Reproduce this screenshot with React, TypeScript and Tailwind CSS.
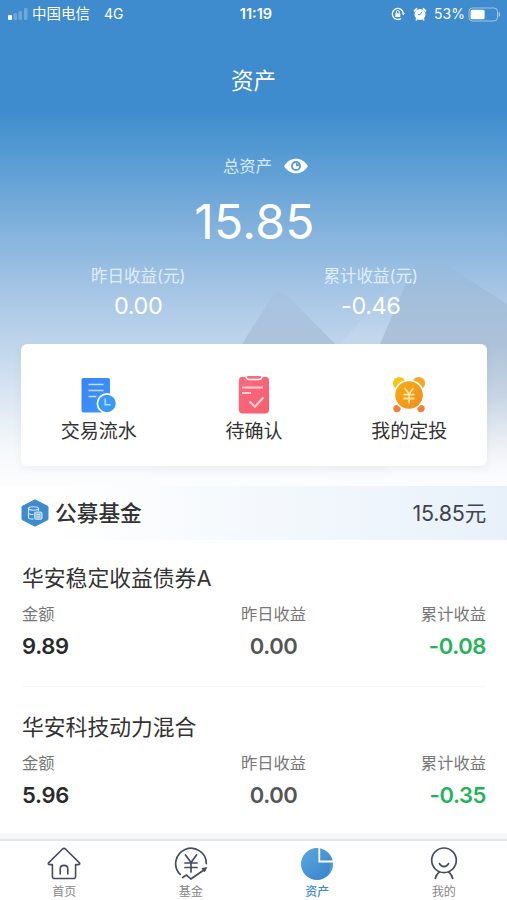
import { FC, ReactNode } from "react";

const funds = [
    { name: "华安稳定收益债券A", amount: "9.89", yesterday: "0.00", total: "-0.08" },
    { name: "华安科技动力混合", amount: "5.96", yesterday: "0.00", total: "-0.35" },
];

const StatusBar: FC = () => (
    <div className="relative flex h-7 items-center justify-between pl-2 pr-[6px] text-[14.5px] leading-7">
        <div className="flex items-center">
            <svg width="20" height="14" viewBox="0 0 20 14" fill="#fff">
                <rect x="0" y="8" width="4" height="5" rx="1" />
                <rect x="5.5" y="6" width="3.5" height="7" rx="1" opacity=".25" />
                <rect x="10.5" y="4" width="3.5" height="9" rx="1" opacity=".25" />
                <rect x="16" y="1" width="3.5" height="12" rx="1" opacity=".25" />
            </svg>
            <span className="ml-1">中国电信</span>
            <span className="ml-[14px] text-[14px]">4G</span>
        </div>
        <div className="absolute inset-x-0 pl-[5px] text-center font-semibold">11:19</div>
        <div className="flex items-center">
            <svg width="14" height="14" viewBox="0 0 14 14" fill="none" stroke="#fff" strokeWidth="1.3">
                <path d="M12.3 6.2A5.5 5.5 0 1 0 9.8 11.6" />
                <path d="M10.7 6.2h3.2l-1.6 2.4z" fill="#fff" stroke="none" />
                <rect x="4.3" y="6.2" width="5" height="3.7" rx=".5" fill="#fff" stroke="none" />
                <path d="M5.3 6.2V5a1.5 1.5 0 0 1 3 0v1.2" strokeWidth="1" />
            </svg>
            <svg className="ml-2" width="14" height="14" viewBox="0 0 14 14">
                <circle cx="7" cy="7.4" r="5.5" fill="#fff" />
                <path d="M1.4 3.8 3.6 1.7M12.6 3.8 10.4 1.7M3.3 12.8l1.2-1.5M10.7 12.8l-1.2-1.5" stroke="#fff" strokeWidth="1.6" strokeLinecap="round" />
                <path d="M9 4.8 7.2 7.6H5" fill="none" stroke="#3f8bcd" strokeWidth=".9" />
            </svg>
            <span className="ml-[7px] text-[14px]">53%</span>
            <svg className="ml-[3px]" width="33" height="15" viewBox="0 0 33 15">
                <rect x="1" y="1" width="28.5" height="13" rx="3.5" fill="none" stroke="#fff" strokeOpacity=".5" />
                <rect x="2.6" y="2.7" width="14" height="9.6" rx="1.5" fill="#fff" />
                <path d="M30.6 5v5c2-.6 2-4.4 0-5z" fill="#fff" opacity=".55" />
            </svg>
        </div>
    </div>
);

const Mountains: FC = () => (
    <svg className="absolute inset-0" width="507" height="486" viewBox="0 0 507 486">
        <defs>
            <linearGradient id="peakSmall" x1="0" y1="288" x2="0" y2="480" gradientUnits="userSpaceOnUse">
                <stop offset="0" stopColor="#8fa3ba" stopOpacity=".05" />
                <stop offset=".25" stopColor="#8fa3ba" stopOpacity=".34" />
                <stop offset=".6" stopColor="#9fb0c4" stopOpacity=".3" />
                <stop offset="1" stopColor="#cbd3dc" stopOpacity="0" />
            </linearGradient>
            <linearGradient id="peakLarge" x1="0" y1="250" x2="0" y2="475" gradientUnits="userSpaceOnUse">
                <stop offset="0" stopColor="#8ba4bf" stopOpacity="0" />
                <stop offset=".22" stopColor="#8fa3ba" stopOpacity=".26" />
                <stop offset=".42" stopColor="#8fa3ba" stopOpacity=".38" />
                <stop offset=".65" stopColor="#9fb0c4" stopOpacity=".32" />
                <stop offset="1" stopColor="#cbd3dc" stopOpacity="0" />
            </linearGradient>
            <linearGradient id="glow" x1="0" y1="250" x2="0" y2="350" gradientUnits="userSpaceOnUse">
                <stop offset="0" stopColor="#fff" stopOpacity="0" />
                <stop offset="1" stopColor="#fff" stopOpacity=".1" />
            </linearGradient>
        </defs>
        <path d="M419 254 380 344H340z" fill="url(#glow)" />
        <path d="M273 295q6-7 15 1l47 48 60 142H140l102-142z" fill="url(#peakSmall)" />
        <path d="M419 254q4-3 12 1l76 49v182H320l60-142z" fill="url(#peakLarge)" />
    </svg>
);

const RecordIcon: FC = () => (
    <svg width="36" height="38" viewBox="0 0 36 38" fill="none">
        <defs>
            <linearGradient id="rec" x1="0" y1="0" x2="1" y2="1">
                <stop stopColor="#3b82f4" />
                <stop offset="1" stopColor="#3a98fb" />
            </linearGradient>
        </defs>
        <rect x=".5" y="2" width="28.5" height="34.5" rx="2" fill="url(#rec)" />
        <path d="M7.5 8.5h15M7.5 14.5h15M7.5 20.5h8" stroke="#bfe0ff" strokeWidth="1.3" />
        <circle cx="26" cy="27.4" r="9.6" fill="#3a98fb" stroke="#fff" strokeWidth="1.7" />
        <path d="M24.3 22.5v6.3h5.4" stroke="#a9e1ff" strokeWidth="1.6" />
    </svg>
);

const ConfirmIcon: FC = () => (
    <svg width="32" height="38" viewBox="0 0 32 38" fill="none">
        <defs>
            <linearGradient id="conf" x1="0" y1="0" x2="1" y2="1">
                <stop stopColor="#fb6983" />
                <stop offset="1" stopColor="#f85f6c" />
            </linearGradient>
        </defs>
        <rect x=".8" y=".8" width="30.2" height="36.8" rx="4" fill="url(#conf)" />
        <path d="M7.5 0c1 2.8 2 3.5 3.5 3.5h10c1.5 0 2.5-.7 3.5-3.5" stroke="#fff" strokeWidth="1.7" />
        <path d="M9 0h14l-1.2 2H10.2z" fill="#f96a7d" />
        <path d="M4 11.5h21M4 17h9" stroke="#ffd0d5" strokeWidth="1.8" />
        <path d="m11.5 25.5 5.5 5.2 8.5-9.5" stroke="#ffd0d5" strokeWidth="2.2" />
    </svg>
);

const PlanIcon: FC = () => (
    <svg width="34" height="38" viewBox="0 0 34 38" fill="none">
        <defs>
            <linearGradient id="plan" x1="0" y1="0" x2="1" y2="1">
                <stop stopColor="#f9b011" />
                <stop offset="1" stopColor="#ee8a1f" />
            </linearGradient>
        </defs>
        <circle cx="7.3" cy="7.3" r="6.3" fill="#fac312" />
        <circle cx="26.7" cy="7.3" r="6.3" fill="#f6a71d" />
        <circle cx="5" cy="32.6" r="3.7" fill="#f17f3a" />
        <circle cx="29" cy="32.6" r="3.7" fill="#f17f3a" />
        <circle cx="17" cy="19" r="14.6" fill="url(#plan)" stroke="#fff" strokeWidth="1.6" />
        <path d="m12.5 12 4.5 6 4.5-6M11.5 18.6h11M11.5 22.5h11M17 18v9.5" stroke="#ffe6a3" strokeWidth="1.8" />
    </svg>
);

const HomeIcon: FC = () => (
    <svg width="34" height="34" viewBox="0 0 34 34" fill="none" stroke="#454c61" strokeWidth="1.6" strokeLinecap="round" strokeLinejoin="round">
        <path d="M15.3 2.2 1.8 15.6c-1 1-.5 2 .7 2h2.9v11.6c0 1.5.8 2.3 2.3 2.3h18.6c1.5 0 2.3-.8 2.3-2.3V17.6h2.9c1.2 0 1.7-1 .7-2L18.7 2.2q-1.7-1.5-3.4 0z" />
        <path d="M13.2 27v-5.2c0-4.6 7.6-4.6 7.6 0V27" />
    </svg>
);

const FundIcon: FC = () => (
    <svg width="34" height="34" viewBox="0 0 34 34" fill="none" stroke="#454c61" strokeWidth="1.7" strokeLinecap="round" strokeLinejoin="round">
        <path d="M6.2 27.4A15.3 15.3 0 1 1 32.3 16.6" />
        <path d="m11.5 8 5.5 7.5L22.5 8M11 16h12M11 20.5h12M17 15.5V25" />
        <path d="m8.6 30.5 4-2.4 4.2 3.9 14.2-9.8" />
        <path d="m32.3 20.7-4.2.8 2.2 3z" fill="#454c61" strokeWidth="1" />
    </svg>
);

const AssetIcon: FC = () => (
    <svg width="34" height="34" viewBox="0 0 34 34" fill="none">
        <defs>
            <linearGradient id="pie" x1="0" y1="0" x2="1" y2="1">
                <stop stopColor="#5aa9e3" />
                <stop offset="1" stopColor="#3780c7" />
            </linearGradient>
        </defs>
        <circle cx="17" cy="17" r="16" fill="url(#pie)" />
        <path d="M30 15.3A13 13 0 0 1 24 29.8a16 16 0 0 0 9-14.5z" fill="#5ba5df" opacity=".7" />
        <path d="M19.3 0v14.5H34" stroke="#fff" strokeWidth="1.8" />
    </svg>
);

const MineIcon: FC = () => (
    <svg width="34" height="34" viewBox="0 0 34 34" fill="none" stroke="#454c61" strokeWidth="1.7" strokeLinecap="round">
        <circle cx="17" cy="13.3" r="12.3" />
        <path d="M12.5 16.6c2 3.9 7 3.9 9 0M8.3 31.5c.6-2.6 2-4.8 4-6.6M25.7 31.5c-.6-2.6-2-4.8-4-6.6" />
    </svg>
);

const tabs: { label: string; icon: ReactNode; active?: boolean }[] = [
    { label: "首页", icon: <HomeIcon /> },
    { label: "基金", icon: <FundIcon /> },
    { label: "资产", icon: <AssetIcon />, active: true },
    { label: "我的", icon: <MineIcon /> },
];

const actions = [
    { label: "交易流水", icon: <RecordIcon /> },
    { label: "待确认", icon: <ConfirmIcon /> },
    { label: "我的定投", icon: <PlanIcon /> },
];

const App: FC = () => {
    return (
        <div className="flex h-[900px] w-[507px] flex-col overflow-hidden bg-white font-['Inter','Noto_Sans_CJK_SC',sans-serif] text-[#333]">
            <header className="relative h-[486px] shrink-0 bg-[linear-gradient(180deg,#3e8bcd_0px,#3e8bcd_110px,#4d96d1_140px,#7dafdb_220px,#a5c5e5_290px,#bfd5eb_344px,#dfe9f4_405px,#f5f8fb_450px,#fdfdfe_486px)] text-white">
                <Mountains />
                <div className="relative">
                    <StatusBar />
                    <h1 className="mt-9 text-center text-[22.5px] leading-[34px]">资产</h1>
                    <div className="mt-14 flex h-6 items-center justify-center pl-6">
                        <span className="text-[16.3px] leading-6 text-[#d8e9f8]">总资产</span>
                        <svg className="ml-3" width="24" height="16" viewBox="0 0 24 16">
                            <path d="M0 8C6-1.8 18-1.8 24 8 18 17.8 6 17.8 0 8z" fill="#fff" />
                            <circle cx="12" cy="8" r="5" fill="#5a9dd5" />
                            <circle cx="12" cy="8" r="3.1" fill="#fff" />
                            <path d="M12 5v3.2h3A3.2 3.2 0 0 0 12 5z" fill="#5a9dd5" />
                        </svg>
                    </div>
                    <div className="mt-[19px] pl-[2px] text-center text-[48px] leading-[50px] tracking-[0.3px]">15.85</div>
                    <div className="mt-[17px] grid grid-cols-2 pl-[22px] pr-5 text-center">
                        <div>
                            <div className="text-[16.5px] leading-6 text-[#e0edf8]">昨日收益(元)</div>
                            <div className="mt-[2px] text-[23.5px] leading-8 tracking-[-0.4px]">0.00</div>
                        </div>
                        <div>
                            <div className="text-[16.5px] leading-6 text-[#e0edf8]">累计收益(元)</div>
                            <div className="mt-[2px] text-[23.5px] leading-8 tracking-[-0.4px]">-0.46</div>
                        </div>
                    </div>
                    <div className="ml-[21px] mr-5 mt-[22px] grid h-[122px] grid-cols-3 rounded-md bg-white pt-8 text-[#333] shadow-[0_3px_8px_rgba(80,100,130,0.07)]">
                        {actions.map((a) => (
                            <div key={a.label} className="flex flex-col items-center">
                                {a.icon}
                                <span className="mt-[6px] text-[19px] leading-6">{a.label}</span>
                            </div>
                        ))}
                    </div>
                </div>
            </header>

            <section className="flex h-[54px] shrink-0 items-center bg-linear-to-r from-white from-10% to-[#e8f1fa] px-[21px]">
                <svg width="28" height="28" viewBox="0 0 28 28" fill="none">
                    <path d="M14 .8 27 7.5v13L14 27.2 1 20.5v-13z" fill="#3d8bcd" stroke="#3d8bcd" strokeLinejoin="round" />
                    <g stroke="#d4e8f8" strokeWidth="1.1">
                        <ellipse cx="12.5" cy="9.5" rx="5" ry="1.7" />
                        <path d="M7.5 9.5v9c0 1 2.5 1.6 5 1.6M17.5 9.5V12M7.5 14c0 1 2.5 1.6 5 1.6" />
                        <rect x="13.7" y="13" width="7.3" height="7.2" rx="1.5" fill="#8bbbe3" />
                        <path d="M15.5 15.5h3.7M15.5 17.9h3.7" />
                    </g>
                </svg>
                <h2 className="ml-[6px] grow text-[21.7px] font-medium">公募基金</h2>
                <span className="text-[21.5px] tracking-[-0.2px] text-[#3f444c]">15.85元</span>
            </section>

            <main className="h-[293px] shrink-0 pl-[22px] pr-[21px]">
                {funds.map((f) => (
                    <article key={f.name} className="border-[#f7f7f7] pt-6 first:h-[147px] first:border-b first:pt-[22px]">
                        <h3 className="text-[21.8px] leading-8">{f.name}</h3>
                        <div className="mt-2 grid grid-cols-3">
                            <div>
                                <div className="text-[16.3px] leading-6 text-[#777]">金额</div>
                                <div className="mt-1 text-[22px] font-semibold leading-8 tracking-[-0.3px] text-[#2a2a2a]">{f.amount}</div>
                            </div>
                            <div className="pl-[39px] text-center">
                                <div className="text-[16.3px] leading-6 text-[#777]">昨日收益</div>
                                <div className="mt-1 text-[22px] font-semibold leading-8 tracking-[-0.4px] text-[#555]">{f.yesterday}</div>
                            </div>
                            <div className="text-right">
                                <div className="text-[16.3px] leading-6 text-[#777]">累计收益</div>
                                <div className="mt-1 text-[22px] font-semibold leading-8 tracking-[-0.4px] text-[#24b35a]">{f.total}</div>
                            </div>
                        </div>
                    </article>
                ))}
            </main>

            <div className="h-[8px] shrink-0 border-b-2 border-[#e4e6e8] bg-[#f6f7f8]" />
            <nav className="grid h-[59px] shrink-0 grid-cols-4 pl-px pt-[6px]">
                {tabs.map((t) => (
                    <div key={t.label} className="flex flex-col items-center">
                        {t.icon}
                        <span className={t.active ? "mt-[2px] text-[12px] font-medium leading-[18px] text-[#3f8bcd]" : "mt-[2px] text-[12px] leading-[18px] text-[#858585]"}>
                            {t.label}
                        </span>
                    </div>
                ))}
            </nav>
        </div>
    );
};

export default App;
